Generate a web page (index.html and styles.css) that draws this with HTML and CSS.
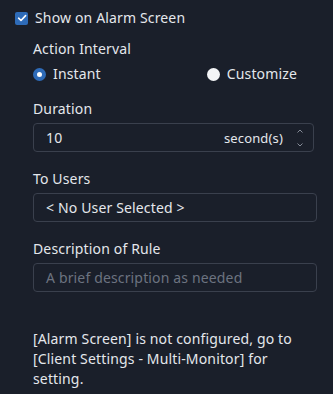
FILE: index.html
```html
<!DOCTYPE html>
<html lang="en">
  <head>
    <meta charset="UTF-8" />
    <meta name="viewport" content="width=device-width, initial-scale=1.0" />
    <title>Alarm Screen Action</title>
    <link rel="stylesheet" href="styles.css">
  </head>
  <body>
    <div class="panel">
      <label class="check-row">
        <span class="checkbox">
          <svg width="10" height="10" viewBox="0 0 10 10">
            <path d="M1.6 5.2 L4 7.5 L8.6 2.6" fill="none" stroke="#fff" stroke-width="1.6" stroke-linecap="round" stroke-linejoin="round" />
          </svg>
        </span>
        Show on Alarm Screen
      </label>

      <div class="section">
        <div class="label">Action Interval</div>
        <div class="radio-row">
          <span class="radio-item"><span class="radio checked"></span>Instant</span>
          <span class="radio-item"><span class="radio"></span>Customize</span>
        </div>

        <div class="label spaced">Duration</div>
        <div class="field number">
          <span class="value">10</span>
          <span class="unit">second(s)</span>
          <span class="spinner">
            <svg width="8" height="20" viewBox="0 0 8 20">
              <path d="M1.5 4.5 L4 2 L6.5 4.5" fill="none" stroke="#858b97" stroke-width="1" />
              <path d="M1.5 15.5 L4 18 L6.5 15.5" fill="none" stroke="#858b97" stroke-width="1" />
            </svg>
          </span>
        </div>

        <div class="label spaced">To Users</div>
        <div class="field wide">&lt; No User Selected &gt;</div>

        <div class="label spaced">Description of Rule</div>
        <div class="field wide placeholder">A brief description as needed</div>

        <p class="note">[Alarm Screen] is not configured, go to [Client Settings - Multi-Monitor] for setting.</p>
      </div>
    </div>
  </body>
</html>
```

FILE: styles.css
```css
body {
  margin: 0;
  padding: 0;
  background-color: #1a1f2a;
  color: #e4e7ec;
  font-family: "Noto Sans", "Open Sans", sans-serif;
  font-size: 14px;
  line-height: 20px;
  letter-spacing: 0.15px;
}

.panel {
  padding: 8px 16px 0 15px;
}

.check-row {
  display: flex;
  align-items: center;
  gap: 7px;
  height: 20px;
}

.checkbox {
  width: 13px;
  height: 13px;
  border-radius: 2px;
  background-color: #2e6bb8;
  display: flex;
  align-items: center;
  justify-content: center;
}

.section {
  padding-left: 18px;
  margin-top: 11px;
}

.label.spaced {
  margin-top: 15px;
}

.field + .label.spaced {
  margin-top: 17px;
}

.radio-row {
  display: flex;
  justify-content: space-between;
  margin-top: 5px;
  width: 264px;
}

.radio-item {
  display: flex;
  align-items: center;
  gap: 7px;
}

.radio {
  width: 13px;
  height: 13px;
  border-radius: 50%;
  background-color: #f4f5f7;
  box-sizing: border-box;
}

.radio.checked {
  background-color: #fff;
  border: 4px solid #2e6bb8;
}

.field {
  margin-top: 4px;
  height: 29px;
  box-sizing: border-box;
  border: 1px solid #3a404d;
  border-radius: 4px;
  padding: 0 12px;
  display: flex;
  align-items: center;
}

.field.number {
  width: 281px;
  padding-right: 9px;
}

.field.wide {
  width: 284px;
}

.number .value {
  flex: 1;
}

.number .unit {
  font-size: 13px;
}

.spinner {
  display: flex;
  margin-left: 13px;
}

.placeholder {
  color: #6c7380;
}

.note {
  margin: 37px 0 0 0;
  width: 268px;
}
```
